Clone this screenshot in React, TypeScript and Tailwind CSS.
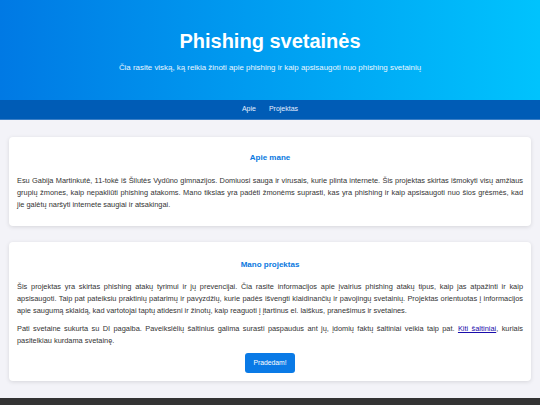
import React from "react";

export default function App() {
  return (
    <div className="min-h-[405px] bg-[#f3f3f8] flex flex-col" style={{ fontFamily: '"Liberation Sans", Arial, sans-serif' }}>
      <header className="h-[100px] bg-gradient-to-r from-[#0079e4] to-[#00c3fd] flex flex-col items-center pt-[29px] text-white">
        <h1 className="text-[20px] leading-[24px] font-bold">Phishing svetainės</h1>
        <p className="text-[7.9px] leading-[12px] mt-[9px] text-[#eaf6ff]">
          Čia rasite viską, ką reikia žinoti apie phishing ir kaip apsisaugoti nuo phishing svetainių
        </p>
      </header>
      <nav className="h-[20px] bg-[#005cb6] border-b border-[#3c7fc6] flex items-center justify-center gap-[13px] text-[7px] text-[#e6efff]">
        <a>Apie</a>
        <a>Projektas</a>
      </nav>
      <main className="flex-1 px-[9px] pt-[17px] pb-[17px] flex flex-col gap-[16px]">
        <section className="bg-white rounded-[4px] shadow-[0_1px_4px_rgba(0,0,0,0.12)] px-[8px] pt-[15px] pb-[9px]">
          <h2 className="text-center text-[8px] leading-[12px] font-bold text-[#0a78e0]">Apie mane</h2>
          <p className="mt-[11px] mb-[6px] text-[7.4px] leading-[12px] text-[#333] text-justify">
            Esu Gabija Martinkutė, 11-tokė iš Šilutės Vydūno gimnazijos. Domiuosi sauga ir virusais, kurie plinta internete. Šis projektas skirtas išmokyti visų amžiaus grupių žmones, kaip nepakliūti phishing atakoms. Mano tikslas yra padėti žmonėms suprasti, kas yra phishing ir kaip apsisaugoti nuo šios grėsmės, kad jie{"\u00a0"}galėtų naršyti internete saugiai ir atsakingai.
          </p>
        </section>
        <section className="bg-white rounded-[4px] shadow-[0_1px_4px_rgba(0,0,0,0.12)] px-[8px] pt-[17px] pb-[8px] flex flex-col">
          <h2 className="text-center text-[8px] leading-[12px] font-bold text-[#0a78e0]">Mano projektas</h2>
          <p className="mt-[10px] text-[7.4px] leading-[12px] text-[#333] text-justify">
            Šis projektas yra skirtas phishing atakų tyrimui ir jų prevencijai. Čia rasite informacijos apie įvairius phishing atakų tipus, kaip jas atpažinti ir kaip apsisaugoti. Taip pat pateiksiu praktinių patarimų ir pavyzdžių, kurie padės išvengti klaidinančių ir pavojingų svetainių. Projektas orientuotas į informacijos apie saugumą sklaidą, kad vartotojai taptų atidesni ir žinotų, kaip reaguoti į įtartinus el. laiškus, pranešimus ir svetaines.
          </p>
          <p className="mt-[6px] text-[7.4px] leading-[12px] text-[#333] text-justify">
            Pati svetaine sukurta su DI pagalba. Paveikslėlių šaltinius galima surasti paspaudus ant jų, įdomių faktų šaltiniai veikia taip pat.{" "}
            <a className="text-[#1a0dab] underline">Kiti šaltiniai</a>, kuriais pasitelkiau kurdama svetainę.
          </p>
          <div className="mt-[6px] flex justify-center">
            <button className="w-[50px] h-[20px] rounded-[3px] bg-[#0a7ae6] text-white text-[6.8px]">Pradedam!</button>
          </div>
        </section>
      </main>
      <footer className="h-[7px] bg-[#333333]" />
    </div>
  );
}
